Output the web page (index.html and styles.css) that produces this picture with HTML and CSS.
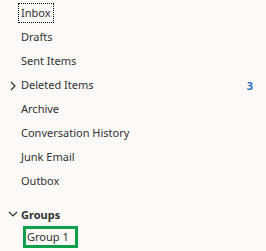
FILE: index.html
```html
<!DOCTYPE html>
<html lang="en">
<head>
    <meta charset="UTF-8">
    <meta name="viewport" content="width=device-width, initial-scale=1.0">
    <title>Folders</title>
    <link rel="stylesheet" href="styles.css">
</head>
<body>
    <ul class="folder-list">
        <li class="folder"><span class="folder-name focused">Inbox</span></li>
        <li class="folder"><span class="folder-name">Drafts</span></li>
        <li class="folder"><span class="folder-name">Sent Items</span></li>
        <li class="folder">
            <svg class="chevron" width="6" height="10" viewBox="0 0 6 10"><path d="M1 1 L5 5 L1 9" fill="none" stroke="#323130" stroke-width="1.2"/></svg>
            <span class="folder-name">Deleted Items</span>
            <span class="count">3</span>
        </li>
        <li class="folder"><span class="folder-name">Archive</span></li>
        <li class="folder"><span class="folder-name">Conversation History</span></li>
        <li class="folder"><span class="folder-name">Junk Email</span></li>
        <li class="folder"><span class="folder-name">Outbox</span></li>
    </ul>

    <div class="groups">
        <div class="group-header">
            <svg class="chevron-down" width="10" height="6" viewBox="0 0 10 6"><path d="M1 1 L5 5 L9 1" fill="none" stroke="#323130" stroke-width="1.2"/></svg>
            <span>Groups</span>
        </div>
        <div class="group-item"><span class="group-name">Group 1</span></div>
    </div>
</body>
</html>
```

FILE: styles.css
```css
body {
    margin: 0;
    background-color: #faf9f8;
    font-family: "Noto Sans", "Open Sans", sans-serif;
    font-size: 11px;
    color: #323130;
}

.folder-list {
    list-style: none;
    margin: 0;
    padding: 1px 0 0 0;
}

.folder {
    position: relative;
    display: flex;
    align-items: center;
    height: 24px;
    padding-left: 21px;
    padding-right: 13px;
}

.folder-name {
    flex: 1;
    line-height: 16px;
}

.focused {
    flex: none;
    outline: 1px dotted #000000;
    outline-offset: 1px;
    padding: 0 1px 0 1px;
    margin-left: -1px;
}

.chevron {
    position: absolute;
    left: 10px;
    top: 8px;
}

.count {
    color: #2b6cc4;
    font-weight: bold;
}

.groups {
    margin-top: 9px;
}

.group-header {
    display: flex;
    align-items: center;
    height: 24px;
    padding-left: 8px;
    font-weight: bold;
}

.chevron-down {
    margin-right: 3px;
}

.group-item {
    display: flex;
    padding-left: 23px;
}

.group-name {
    border: 3px solid #0ea04b;
    height: 16px;
    line-height: 16px;
    padding: 0 6px 0 1px;
}
```
